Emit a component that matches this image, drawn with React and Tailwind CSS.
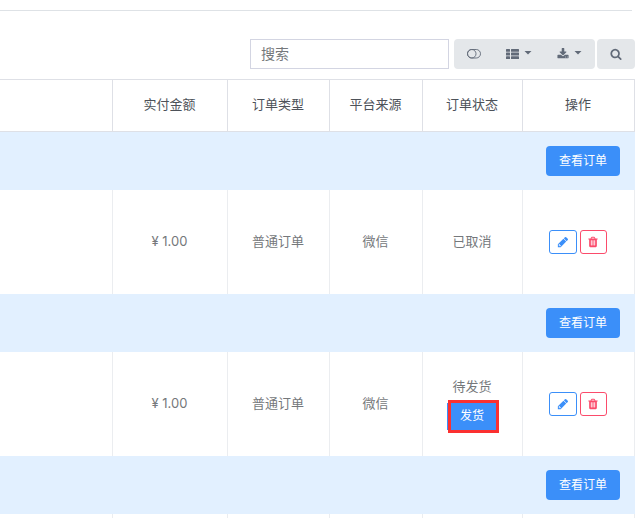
import { useState } from "react";

const orders = [
  { id: 1, amount: "¥ 1.00", type: "普通订单", source: "微信", status: "已取消", canShip: false },
  { id: 2, amount: "¥ 1.00", type: "普通订单", source: "微信", status: "待发货", canShip: true },
  { id: 3, amount: "", type: "", source: "", status: "", canShip: false },
];


// ICONS
const paths = {
  search: "M1216 832q0-185-131.5-316.5t-316.5-131.5-316.5 131.5-131.5 316.5 131.5 316.5 316.5 131.5 316.5-131.5 131.5-316.5zm512 832q0 52-38 90t-90 38q-54 0-90-38l-343-342q-179 124-399 124-143 0-273.5-55.5t-225-150-150-225-55.5-273.5 55.5-273.5 150-225 225-150 273.5-55.5 273.5 55.5 225 150 150 225 55.5 273.5q0 220-124 399l343 343q37 37 37 90z",
  pencil: "M491 1536l91-91-235-235-91 91v107h128v128h107zM960 416l416 416-832 832h-416v-416zm683 96q0 53-37 90l-166 166-416-416 166-165q36-38 90-38 53 0 91 38l235 234q37 39 37 91z",
  trash: "M704 1376v-704q0-14-9-23t-23-9h-64q-14 0-23 9t-9 23v704q0 14 9 23t23 9h64q14 0 23-9t9-23zm256 0v-704q0-14-9-23t-23-9h-64q-14 0-23 9t-9 23v704q0 14 9 23t23 9h64q14 0 23-9t9-23zm256 0v-704q0-14-9-23t-23-9h-64q-14 0-23 9t-9 23v704q0 14 9 23t23 9h64q14 0 23-9t9-23zm-544-992h448l-48-117q-7-9-17-11h-317q-10 2-17 11zm928 32v64q0 14-9 23t-23 9h-96v948q0 83-47 143.5t-113 60.5h-832q-66 0-113-58.5t-47-141.5v-952h-96q-14 0-23-9t-9-23v-64q0-14 9-23t23-9h309l70-167q15-37 54-63t79-26h320q40 0 79 26t54 63l70 167h309q14 0 23 9t9 23z",
  download: "M1344 1344q0-26-19-45t-45-19-45 19-19 45 19 45 45 19 45-19 19-45zm256 0q0-26-19-45t-45-19-45 19-19 45 19 45 45 19 45-19 19-45zm128-224v320q0 40-28 68t-68 28h-1472q-40 0-68-28t-28-68v-320q0-40 28-68t68-28h465l135 136q58 56 136 56t136-56l136-136h464q40 0 68 28t28 68zm-325-569q17 41-14 70l-448 448q-18 19-45 19t-45-19l-448-448q-31-29-14-70 17-39 59-39h256v-448q0-26 19-45t45-19h256q26 0 45 19t19 45v448h256q42 0 59 39z",
};

function Icon({ name, className = "size-3" }) {
  return (
    <svg viewBox="0 0 1792 1792" fill="currentColor" className={className} aria-hidden="true">
      <path d={paths[name]} />
    </svg>
  );
}

function ToggleIcon() {
  return (
    <svg viewBox="0 0 14 10" fill="none" stroke="currentColor" strokeWidth="0.9" className="h-[10px] w-[14px]" aria-hidden="true">
      <rect x="0.5" y="0.5" width="13" height="8.5" rx="4.25" />
      <circle cx="4.75" cy="4.75" r="4.25" />
    </svg>
  );
}

function ListIcon() {
  return (
    <svg viewBox="0 0 13 10" fill="currentColor" className="h-[10px] w-[13px]" aria-hidden="true">
      <rect width="4" height="2.8" rx="0.5" />
      <rect x="5" width="8" height="2.8" rx="0.5" />
      <rect y="3.6" width="4" height="2.8" rx="0.5" />
      <rect x="5" y="3.6" width="8" height="2.8" rx="0.5" />
      <rect y="7.2" width="4" height="2.8" rx="0.5" />
      <rect x="5" y="7.2" width="8" height="2.8" rx="0.5" />
    </svg>
  );
}

function Caret() {
  return (
    <svg viewBox="0 0 8 4" fill="currentColor" className="mb-[2px] h-1 w-2" aria-hidden="true">
      <path d="M0.5 0h7L4 3.5z" />
    </svg>
  );
}


function OrderRows({ order }) {
  return (
    <>
      <tr className="h-[58px] bg-[#e2f0ff]">
        <td colSpan={6} className="pr-[15px] text-right">
          <button type="button" className="h-[30px] rounded bg-[#3b8ff9] px-[13px] align-middle text-xs text-white">
            查看订单
          </button>
        </td>
      </tr>

      <tr className="h-[104px] text-[#75787b]">
        <td className="border-r border-[#ebedf0]"></td>
        <td className="border-r border-[#ebedf0] pr-px">{order.amount}</td>
        <td className="border-r border-[#ebedf0] pr-px">{order.type}</td>
        <td className="border-r border-[#ebedf0] pr-px">{order.source}</td>
        <td className="border-r border-[#ebedf0] pr-px pb-[3px]">
          <div className="flex flex-col items-center gap-[7px]">
            <span className="leading-5">{order.status}</span>
            {order.canShip && (
              <button type="button" className="relative h-[27px] w-[50px] bg-[#3b8ff9] text-xs text-white">
                发货
                <span className="absolute -top-[3px] left-px h-[33px] w-[51px] border-3 border-[#fb3030]"></span>
              </button>
            )}
          </div>
        </td>
        <td className="border-r border-[#ebedf0] pr-[2px]">
          <div className="flex justify-center gap-[3px]">
            <button type="button" aria-label="编辑" className="flex h-6 w-7 items-center justify-center rounded-[3px] border border-[#3b8ff9] text-[#3b8ff9]">
              <Icon name="pencil" />
            </button>
            <button type="button" aria-label="删除" className="flex h-6 w-[27px] items-center justify-center rounded-[3px] border border-[#fb4b6b] text-[#fb4b6b]">
              <Icon name="trash" />
            </button>
          </div>
        </td>
      </tr>
    </>
  );
}


export default function App() {

  const [keyword, setKeyword] = useState("");

  return (
    <div className="h-screen overflow-hidden bg-white pr-[3px] font-['Inter','Noto_Sans_CJK_SC',sans-serif] text-[13px]">

      <hr className="mt-[10px] mr-[3px] border-[#dee2e6]" />

      {/* TOOLBAR */}
      <div className="mt-7 flex justify-end">
        <input
          type="text"
          aria-label="搜索"
          placeholder="搜索"
          value={keyword}
          onChange={e => setKeyword(e.target.value)}
          className="h-[30px] w-[199px] border border-[#d3d5e2] px-[10px] pb-[2px] text-sm text-[#4d5259] outline-none placeholder:text-[#75787b]"
        />

        <div className="ml-[5px] flex h-[30px] overflow-hidden rounded bg-[#e4e7ea] text-[#616a78]">
          <button type="button" aria-label="切换" className="flex w-10 items-center justify-center">
            <ToggleIcon />
          </button>
          <button type="button" aria-label="列" className="flex w-[50px] items-center justify-center gap-[5px]">
            <ListIcon />
            <Caret />
          </button>
          <button type="button" aria-label="导出" className="flex w-[51px] items-center justify-center gap-[5px]">
            <Icon name="download" />
            <Caret />
          </button>
        </div>

        <button type="button" aria-label="搜索订单" className="ml-[2px] flex h-[30px] w-[38px] items-center justify-center rounded bg-[#e4e7ea] text-[#616a78]">
          <Icon name="search" />
        </button>
      </div>

      {/* ORDERS */}
      <table className="mt-[10px] w-full table-fixed border-separate border-spacing-0 text-center">
        <colgroup>
          <col />
          <col className="w-[115px]" />
          <col className="w-[102px]" />
          <col className="w-[93px]" />
          <col className="w-[100px]" />
          <col className="w-[112px]" />
        </colgroup>
        <thead>
          <tr className="h-[53px] text-[#4d5259]">
            <th className="border-y border-r border-[#dee0e6]"></th>
            {["实付金额", "订单类型", "平台来源", "订单状态", "操作"].map(title => (
              <th key={title} className="border-y border-r border-[#dee0e6] pr-px pb-[2px] font-normal">{title}</th>
            ))}
          </tr>
        </thead>
        <tbody>
          {orders.map(order => (
            <OrderRows key={order.id} order={order} />
          ))}
        </tbody>
      </table>

    </div>
  );
}
